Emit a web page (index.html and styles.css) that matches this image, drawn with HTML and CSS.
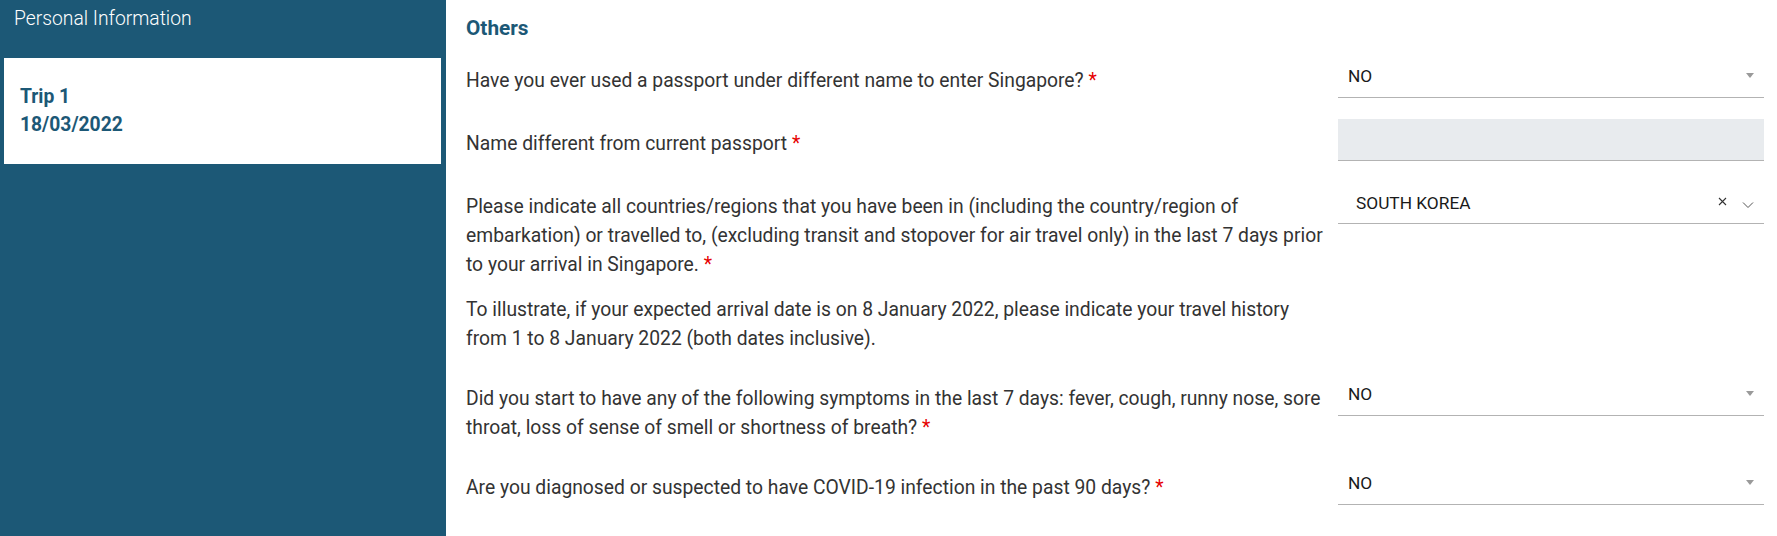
FILE: index.html
```html
<!DOCTYPE html>
<html lang="en">
<head>
<meta charset="utf-8">
<title>Others</title>
<link rel="stylesheet" href="styles.css">
</head>
<body>
<aside class="sidebar">
  <div class="side-title">Personal Information</div>
  <div class="trip-card">
    <div>Trip 1</div>
    <div>18/03/2022</div>
  </div>
</aside>
<main class="content">
  <h2 class="section-title">Others</h2>

  <div class="form-row">
    <div class="label">Have you ever used a passport under different name to enter Singapore? <span class="req">*</span></div>
    <div class="field select">
      <span class="value">NO</span>
      <span class="caret"></span>
    </div>
  </div>

  <div class="form-row">
    <div class="label">Name different from current passport <span class="req">*</span></div>
    <div class="field disabled"></div>
  </div>

  <div class="form-row">
    <div class="label">
      <p class="para">Please indicate all countries/regions that you have been in (including the country/region of embarkation) or travelled to, (excluding transit and stopover for air travel only) in the last 7 days prior to your arrival in Singapore. <span class="req">*</span></p>
      <p class="para note">To illustrate, if your expected arrival date is on 8 January 2022, please indicate your travel history from 1 to 8 January 2022 (both dates inclusive).</p>
    </div>
    <div class="field multi">
      <span class="value">SOUTH KOREA</span>
      <span class="icons">
        <svg class="clear" width="9" height="9" viewBox="0 0 9 9"><path d="M1 1 L8 8 M8 1 L1 8" stroke="#333" stroke-width="1.1" fill="none"/></svg>
        <svg class="chev" width="12" height="8" viewBox="0 0 12 8"><path d="M1 1.5 L6 6.5 L11 1.5" stroke="#555" stroke-width="1" fill="none"/></svg>
      </span>
    </div>
  </div>

  <div class="form-row">
    <div class="label">Did you start to have any of the following symptoms in the last 7 days: fever, cough, runny nose, sore throat, loss of sense of smell or shortness of breath? <span class="req">*</span></div>
    <div class="field select">
      <span class="value">NO</span>
      <span class="caret"></span>
    </div>
  </div>

  <div class="form-row">
    <div class="label">Are you diagnosed or suspected to have COVID-19 infection in the past 90 days? <span class="req">*</span></div>
    <div class="field select">
      <span class="value">NO</span>
      <span class="caret"></span>
    </div>
  </div>
</main>
</body>
</html>
```

FILE: styles.css
```css
* { box-sizing: border-box; }

html, body {
  margin: 0;
  padding: 0;
  background: #ffffff;
}

body {
  display: flex;
  min-height: 536px;
  font-family: Roboto, "Liberation Sans", Arial, sans-serif;
  color: #333333;
}

.sidebar {
  width: 446px;
  flex: 0 0 446px;
  background: #1c5876;
  min-height: 536px;
}

.side-title {
  height: 58px;
  padding: 8px 0 0 14px;
  font-size: 19.3px;
  line-height: 22px;
  font-weight: 300;
  color: #ffffff;
}

.trip-card {
  margin: 0 5px 0 4px;
  background: #ffffff;
  padding: 25px 16px;
  font-size: 19.3px;
  line-height: 28px;
  font-weight: 700;
  color: #1c5876;
}

.content {
  flex: 1;
  padding: 16px 13px 0 20px;
}

.section-title {
  margin: 0 0 16px 0;
  font-size: 20.8px;
  line-height: 24px;
  font-weight: 700;
  color: #1c5876;
}

.form-row {
  display: grid;
  grid-template-columns: 1fr 426px;
  column-gap: 8px;
  align-items: start;
  margin-bottom: 21px;
}

.label {
  padding-top: 10px;
  font-size: 19.3px;
  line-height: 29px;
  color: #333333;
}

.para {
  margin: 0;
}

.para.note {
  margin-top: 16px;
}

.req {
  color: #e60000;
}

.field {
  height: 42px;
  border-bottom: 1px solid #b3b3b3;
  display: flex;
  align-items: center;
  font-size: 17.3px;
  color: #1a1a1a;
}

.field.select {
  padding: 0 10px 2px 10px;
  justify-content: space-between;
}

.field.disabled {
  background: #e8ebee;
}

.field.multi {
  padding: 0 10px 0 18px;
  justify-content: space-between;
}

.caret {
  width: 0;
  height: 0;
  border-left: 4.5px solid transparent;
  border-right: 4.5px solid transparent;
  border-top: 5px solid #9a9a9a;
}

.icons {
  display: flex;
  align-items: center;
  gap: 15px;
}

.clear { display: block; margin-top: -2px; }
.chev { display: block; margin-top: 4px; }
```
